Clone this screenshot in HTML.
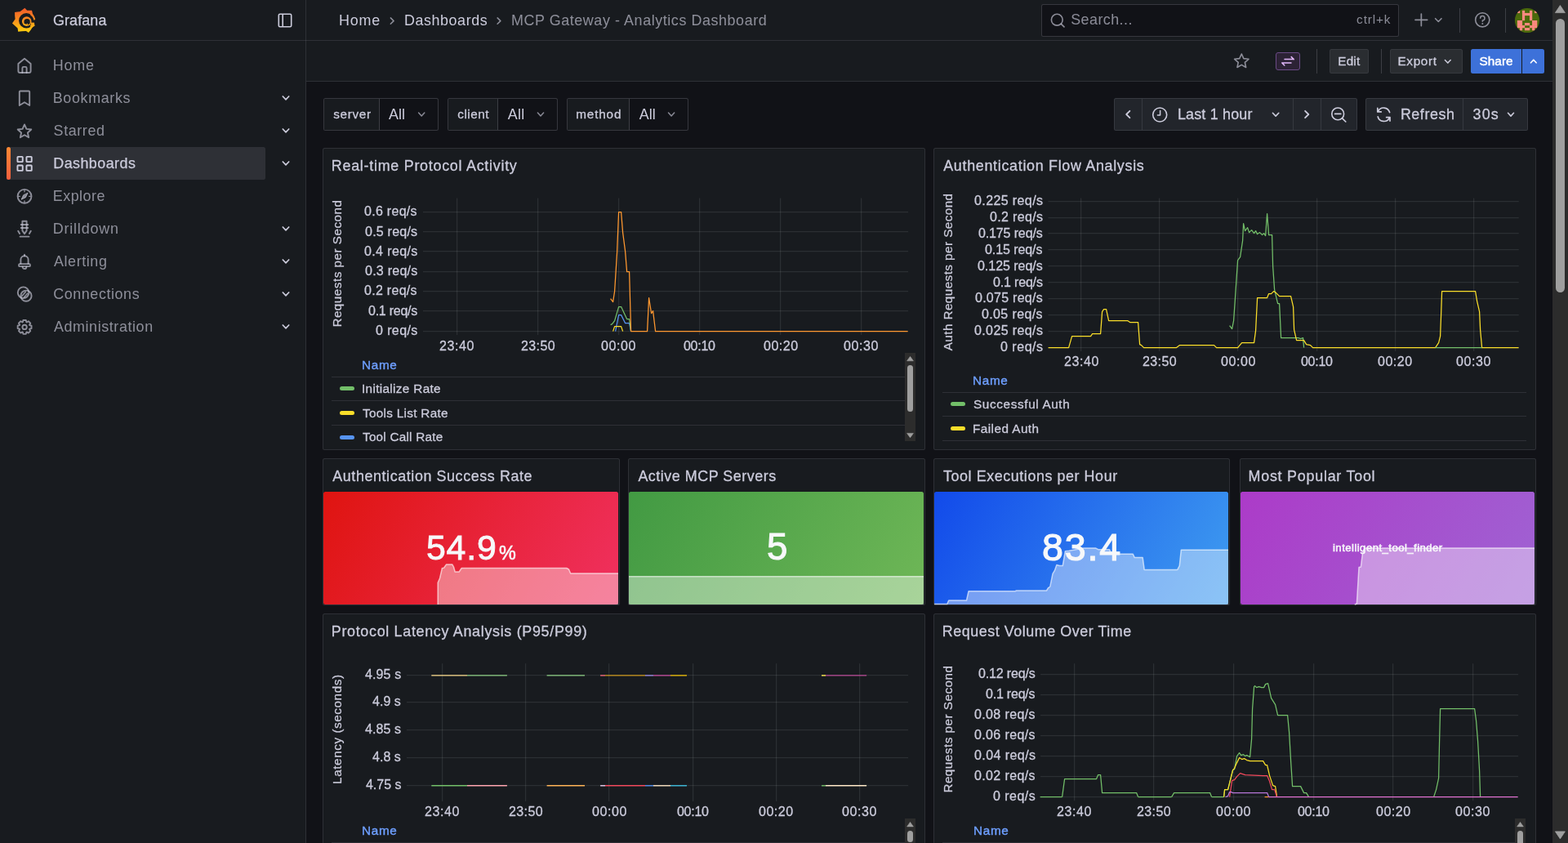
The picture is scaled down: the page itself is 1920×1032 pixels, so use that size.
<!DOCTYPE html>
<html lang="en"><head><meta charset="utf-8">
<title>MCP Gateway - Analytics Dashboard - Dashboards - Grafana</title>
<style>
*{box-sizing:border-box;margin:0;padding:0}
html,body{width:1920px;height:1032px;overflow:hidden;background:#111217;}
body{font-family:"Liberation Sans", sans-serif;color:#ccccdc;position:relative;-webkit-font-smoothing:antialiased;}
.b{position:absolute;display:block}
.t{position:absolute;white-space:nowrap;display:block}
svg{overflow:visible}
svg text{font-family:"Liberation Sans", sans-serif}
</style></head><body>
<div class="b" style="left:0px;top:0px;width:375px;height:1032px;background:#181b1f;border-right:1px solid rgba(204,204,220,0.12);"></div>
<div class="b" style="left:0px;top:0px;width:375px;height:50px;border-bottom:1px solid rgba(204,204,220,0.12);"></div>
<div class="b" style="left:375px;top:0px;width:1526px;height:50px;background:#181b1f;border-bottom:1px solid rgba(204,204,220,0.12);"></div>
<div class="b" style="left:375px;top:50px;width:1526px;height:50px;background:#181b1f;border-bottom:1px solid rgba(204,204,220,0.12);"></div>
<div class="b" style="left:8px;top:180px;width:317px;height:40px;background:rgba(204,204,220,0.12);border-radius:2.5px;"></div>
<div class="b" style="left:8px;top:180px;width:4.6px;height:40px;background:linear-gradient(0deg,#f55f3e 0%,#ff8833 100%);border-radius:2.5px;"></div>
<div class="b" style="left:1275px;top:5px;width:438px;height:40px;background:#111217;border:1px solid rgba(204,204,220,0.20);border-radius:2.5px;"></div>
<div class="b" style="left:1787px;top:10px;width:1px;height:30px;background:rgba(204,204,220,0.20);"></div>
<div class="b" style="left:1843px;top:10px;width:1px;height:30px;background:rgba(204,204,220,0.20);"></div>
<div class="b" style="left:1562px;top:64px;width:30px;height:22px;background:#2c2235;border:1px solid #6a4a86;border-radius:3px;"></div>
<div class="b" style="left:1612px;top:60px;width:1px;height:30px;background:rgba(204,204,220,0.20);"></div>
<div class="b" style="left:1628px;top:60px;width:48px;height:30px;background:rgba(204,204,220,0.10);border:1px solid rgba(204,204,220,0.08);border-radius:2.5px;"></div>
<div class="b" style="left:1691px;top:60px;width:1px;height:30px;background:rgba(204,204,220,0.20);"></div>
<div class="b" style="left:1702px;top:60px;width:89px;height:30px;background:rgba(204,204,220,0.10);border:1px solid rgba(204,204,220,0.08);border-radius:2.5px;"></div>
<div class="b" style="left:1801px;top:60px;width:62px;height:30px;background:#3d71d9;border-radius:2.5px 0 0 2.5px;"></div>
<div class="b" style="left:1864px;top:60px;width:27px;height:30px;background:#3d71d9;border-radius:0 2.5px 2.5px 0;"></div>
<div class="b" style="left:396px;top:120px;width:141px;height:40px;background:#111217;border:1px solid rgba(204,204,220,0.20);border-radius:2.5px;"></div>
<div class="b" style="left:397px;top:121px;width:68px;height:38px;background:#181b1f;border-right:1px solid rgba(204,204,220,0.20);border-radius:2px 0 0 2px;"></div>
<div class="b" style="left:548px;top:120px;width:135px;height:40px;background:#111217;border:1px solid rgba(204,204,220,0.20);border-radius:2.5px;"></div>
<div class="b" style="left:549px;top:121px;width:61px;height:38px;background:#181b1f;border-right:1px solid rgba(204,204,220,0.20);border-radius:2px 0 0 2px;"></div>
<div class="b" style="left:694px;top:120px;width:149px;height:40px;background:#111217;border:1px solid rgba(204,204,220,0.20);border-radius:2.5px;"></div>
<div class="b" style="left:695px;top:121px;width:76px;height:38px;background:#181b1f;border-right:1px solid rgba(204,204,220,0.20);border-radius:2px 0 0 2px;"></div>
<div class="b" style="left:1364px;top:120px;width:35px;height:40px;background:#22252b;border:1px solid rgba(204,204,220,0.12);border-radius:2.5px 0 0 2.5px;"></div>
<div class="b" style="left:1399px;top:120px;width:185px;height:40px;background:#22252b;border:1px solid rgba(204,204,220,0.12);border-radius:0 0 0 0;border-left:0;"></div>
<div class="b" style="left:1584px;top:120px;width:33.5px;height:40px;background:#22252b;border:1px solid rgba(204,204,220,0.12);border-radius:0 0 0 0;border-left:0;"></div>
<div class="b" style="left:1617.5px;top:120px;width:44.5px;height:40px;background:#22252b;border:1px solid rgba(204,204,220,0.12);border-radius:0 2.5px 2.5px 0;border-left:0;"></div>
<div class="b" style="left:1672px;top:120px;width:120px;height:40px;background:#22252b;border:1px solid rgba(204,204,220,0.12);border-radius:2.5px 0 0 2.5px;"></div>
<div class="b" style="left:1792px;top:120px;width:79px;height:40px;background:#22252b;border:1px solid rgba(204,204,220,0.12);border-radius:0 2.5px 2.5px 0;border-left:0;"></div>
<div class="b" style="left:1901px;top:0px;width:19px;height:1032px;background:#2c2c2c;"></div>
<div class="b" style="left:1905px;top:23px;width:11px;height:335px;background:#9f9f9f;border-radius:5.5px;"></div>
<div class="b" style="left:395px;top:181px;width:738px;height:370px;background:#181b1f;border:1px solid rgba(204,204,220,0.12);border-radius:2.5px;"></div>
<svg class="b" style="left:397.90px;top:230.40px;will-change:transform" width="30" height="185.6" viewBox="0 0 30 185.6"><text transform="translate(20 92.80) rotate(-90)" text-anchor="middle" font-size="15.2" fill="#ccccdc" stroke="#ccccdc" stroke-width="0.25" textLength="155.6" lengthAdjust="spacing">Requests per Second</text></svg>
<div class="b" style="left:406px;top:461px;width:702px;height:1px;background:rgba(204,204,220,0.12);"></div>
<div class="b" style="left:415.8px;top:473.2px;width:18px;height:5px;background:#73bf69;border-radius:2.5px;"></div>
<div class="b" style="left:406px;top:490.3px;width:702px;height:1px;background:rgba(204,204,220,0.12);"></div>
<div class="b" style="left:415.8px;top:502.5px;width:18px;height:5px;background:#fade2a;border-radius:2.5px;"></div>
<div class="b" style="left:406px;top:519.6px;width:702px;height:1px;background:rgba(204,204,220,0.12);"></div>
<div class="b" style="left:415.8px;top:532.7px;width:18px;height:5px;background:#5794f2;border-radius:2.5px;"></div>
<div class="b" style="left:1108px;top:432.2px;width:13px;height:107.8px;background:#2c2c2c;"></div>
<div class="b" style="left:1111px;top:446.7px;width:7px;height:57.5px;background:#9f9f9f;border-radius:3.5px;"></div>
<div class="b" style="left:1143px;top:181px;width:738px;height:370px;background:#181b1f;border:1px solid rgba(204,204,220,0.12);border-radius:2.5px;"></div>
<svg class="b" style="left:1145.90px;top:221.55px;will-change:transform" width="30" height="222.3" viewBox="0 0 30 222.3"><text transform="translate(20 111.15) rotate(-90)" text-anchor="middle" font-size="15.2" fill="#ccccdc" stroke="#ccccdc" stroke-width="0.25" textLength="192.3" lengthAdjust="spacing">Auth Requests per Second</text></svg>
<div class="b" style="left:1154px;top:480px;width:715px;height:1px;background:rgba(204,204,220,0.12);"></div>
<div class="b" style="left:1163.8px;top:492.2px;width:18px;height:5px;background:#73bf69;border-radius:2.5px;"></div>
<div class="b" style="left:1154px;top:508.9px;width:715px;height:1px;background:rgba(204,204,220,0.12);"></div>
<div class="b" style="left:1163.8px;top:522px;width:18px;height:5px;background:#fade2a;border-radius:2.5px;"></div>
<div class="b" style="left:1154px;top:539.1px;width:715px;height:1px;background:rgba(204,204,220,0.12);"></div>
<div class="b" style="left:395px;top:561px;width:364px;height:180px;background:#181b1f;border:1px solid rgba(204,204,220,0.12);border-radius:2.5px;"></div>
<div class="b" style="left:396px;top:602px;width:361px;height:138px;background:linear-gradient(120deg,rgb(223,20,16),rgb(240,49,96));border-radius:2.5px;"></div>
<div class="b" style="left:769px;top:561px;width:364px;height:180px;background:#181b1f;border:1px solid rgba(204,204,220,0.12);border-radius:2.5px;"></div>
<div class="b" style="left:770px;top:602px;width:361px;height:138px;background:linear-gradient(120deg,rgb(66,154,67),rgb(111,183,87));border-radius:2.5px;"></div>
<div class="b" style="left:1143px;top:561px;width:363px;height:180px;background:#181b1f;border:1px solid rgba(204,204,220,0.12);border-radius:2.5px;"></div>
<div class="b" style="left:1144px;top:602px;width:360px;height:138px;background:linear-gradient(120deg,rgb(18,74,234),rgb(63,157,240));border-radius:2.5px;"></div>
<div class="b" style="left:1518px;top:561px;width:363px;height:180px;background:#181b1f;border:1px solid rgba(204,204,220,0.12);border-radius:2.5px;"></div>
<div class="b" style="left:1519px;top:602px;width:360px;height:138px;background:linear-gradient(120deg,rgb(172,59,200),rgb(159,99,211));border-radius:2.5px;"></div>
<div class="b" style="left:395px;top:751px;width:738px;height:370px;background:#181b1f;border:1px solid rgba(204,204,220,0.12);border-radius:2.5px;"></div>
<svg class="b" style="left:397.90px;top:811.25px;will-change:transform" width="30" height="163.9" viewBox="0 0 30 163.9"><text transform="translate(20 81.95) rotate(-90)" text-anchor="middle" font-size="15.2" fill="#ccccdc" stroke="#ccccdc" stroke-width="0.25" textLength="133.9" lengthAdjust="spacing">Latency (seconds)</text></svg>
<div class="b" style="left:406px;top:1031px;width:702px;height:1px;background:rgba(204,204,220,0.12);"></div>
<div class="b" style="left:1108px;top:1002.3px;width:13px;height:107.7px;background:#2c2c2c;"></div>
<div class="b" style="left:1111px;top:1017px;width:7px;height:14.3px;background:#9f9f9f;border-radius:3.5px;"></div>
<div class="b" style="left:1143px;top:751px;width:738px;height:370px;background:#181b1f;border:1px solid rgba(204,204,220,0.12);border-radius:2.5px;"></div>
<svg class="b" style="left:1145.90px;top:800.10px;will-change:transform" width="30" height="185.6" viewBox="0 0 30 185.6"><text transform="translate(20 92.80) rotate(-90)" text-anchor="middle" font-size="15.2" fill="#ccccdc" stroke="#ccccdc" stroke-width="0.25" textLength="155.6" lengthAdjust="spacing">Requests per Second</text></svg>
<div class="b" style="left:1154px;top:1031px;width:701px;height:1px;background:rgba(204,204,220,0.12);"></div>
<div class="b" style="left:1855px;top:1002.3px;width:13px;height:107.7px;background:#2c2c2c;"></div>
<div class="b" style="left:1858px;top:1017px;width:7px;height:43px;background:#9f9f9f;border-radius:3.5px;"></div>
<svg class="b" style="left:0;top:0" width="1920" height="1032" viewBox="0 0 1920 1032">

<defs><linearGradient id="lg" gradientUnits="userSpaceOnUse" x1="0" y1="905" x2="0" y2="120">
<stop offset="0" stop-color="#fcd40c"/><stop offset="0.45" stop-color="#f8951d"/><stop offset="1" stop-color="#f1582a"/></linearGradient></defs>
<g transform="translate(10 5) scale(0.03876)">
<path fill="url(#lg)" d="M525 122 L598 202 Q670 192 748 203 Q765 260 772 300 Q840 380 858 492 L815 470 L835 690 Q790 700 762 742 Q720 820 642 902 Q600 862 562 850 Q440 850 315 872 Q305 800 298 760 Q220 690 128 606 Q190 520 222 470 Q205 360 208 258 Q300 250 372 240 Q440 190 525 122 Z"/>
<circle cx="575" cy="522" r="236" fill="#181b1f"/>
<path fill="#181b1f" d="M780 505 L905 470 L905 585 L800 585 Z"/>
<path fill="url(#lg)" d="M700 300 Q800 350 858 492 Q840 500 815 508 Q790 400 700 345 Z"/>
<circle cx="585" cy="545" r="150" fill="url(#lg)"/>
<path fill="url(#lg)" d="M720 580 L812 585 L838 690 Q790 700 762 742 L690 705 Q730 650 720 580 Z"/>
<circle cx="596" cy="560" r="96" fill="#181b1f"/>
<path fill="none" stroke="url(#lg)" stroke-width="34" stroke-linecap="round" d="M520 640 Q570 665 612 632"/>
</g>
<path d="M342.8 17.3 H355.2 A1.5 1.5 0 0 1 356.7 18.8 V31.2 A1.5 1.5 0 0 1 355.2 32.7 H342.8 A1.5 1.5 0 0 1 341.3 31.2 V18.8 A1.5 1.5 0 0 1 342.8 17.3 Z M346.2 17.3 V32.7" fill="none" stroke="#ccccdc" stroke-width="1.6" stroke-linecap="round" stroke-linejoin="round" />
<path d="M22.4 87.05 V77.95 L30 71.75 L37.6 77.95 V87.05 A2 2 0 0 1 35.6 89.05 H24.4 A2 2 0 0 1 22.4 87.05 Z" fill="none" stroke="rgba(204,204,220,0.65)" stroke-width="1.9" stroke-linecap="round" stroke-linejoin="round" />
<path d="M27.4 89.05 V83.35 A1.5 1.5 0 0 1 28.9 81.85 H31.1 A1.5 1.5 0 0 1 32.6 83.35 V89.05" fill="none" stroke="rgba(204,204,220,0.65)" stroke-width="1.9" stroke-linecap="round" stroke-linejoin="round" />
<path d="M346.3 118 L350 121.8 L353.7 118" fill="none" stroke="#ccccdc" stroke-width="1.7" stroke-linecap="round" stroke-linejoin="round" />
<path d="M24.8 111.55 H35.2 A1 1 0 0 1 36.2 112.55 V128.95 L30 125.25 L23.8 128.95 V112.55 A1 1 0 0 1 24.8 111.55 Z" fill="none" stroke="rgba(204,204,220,0.65)" stroke-width="1.9" stroke-linecap="round" stroke-linejoin="round" />
<path d="M346.3 158 L350 161.8 L353.7 158" fill="none" stroke="#ccccdc" stroke-width="1.7" stroke-linecap="round" stroke-linejoin="round" />
<path d="M30.00 152.48 L32.41 157.88 L38.30 158.50 L33.90 162.47 L35.13 168.26 L30.00 165.30 L24.87 168.26 L26.10 162.47 L21.70 158.50 L27.59 157.88 Z" fill="none" stroke="rgba(204,204,220,0.65)" stroke-width="1.9" stroke-linecap="round" stroke-linejoin="round" />
<path d="M346.3 198 L350 201.8 L353.7 198" fill="none" stroke="#ccccdc" stroke-width="1.7" stroke-linecap="round" stroke-linejoin="round" />
<rect x="21.45" y="191.85" width="6.3" height="6.3" rx="0.6" fill="none" stroke="#ccccdc" stroke-width="1.9"/>
<rect x="32.45" y="191.85" width="6.3" height="6.3" rx="0.6" fill="none" stroke="#ccccdc" stroke-width="1.9"/>
<rect x="21.45" y="202.55" width="6.3" height="6.3" rx="0.6" fill="none" stroke="#ccccdc" stroke-width="1.9"/>
<rect x="32.45" y="202.55" width="6.3" height="6.3" rx="0.6" fill="none" stroke="#ccccdc" stroke-width="1.9"/>
<circle cx="30.05" cy="240.3" r="8.45" fill="none" stroke="rgba(204,204,220,0.65)" stroke-width="1.9"/>
<path d="M33.9 236.45 L31.4 241.75 L26.1 244.25 L28.6 238.95 Z" fill="rgba(204,204,220,0.65)" stroke="rgba(204,204,220,0.65)" stroke-width="1" stroke-linecap="round" stroke-linejoin="round" />
<path d="M30 233.15 v1.6 M30 247.55 v-1.6 M22.8 240.35 h1.6 M37.2 240.35 h-1.6" fill="none" stroke="rgba(204,204,220,0.65)" stroke-width="1.3" stroke-linecap="round" stroke-linejoin="round" />
<path d="M346.3 278 L350 281.8 L353.7 278" fill="none" stroke="#ccccdc" stroke-width="1.7" stroke-linecap="round" stroke-linejoin="round" />
<path d="M27.4 270.75 H32.6 V282.35 L30 286.15 L27.4 282.35 Z" fill="none" stroke="rgba(204,204,220,0.65)" stroke-width="1.9" stroke-linecap="round" stroke-linejoin="round" />
<path d="M25.7 274.95 H34.3 M25.7 278.95 H34.3" fill="none" stroke="rgba(204,204,220,0.65)" stroke-width="1.9" stroke-linecap="round" stroke-linejoin="round" />
<path d="M22.2 282.75 L24.1 285.95 M37.8 282.75 L35.9 285.95" fill="none" stroke="rgba(204,204,220,0.65)" stroke-width="1.9" stroke-linecap="round" stroke-linejoin="round" />
<path d="M24.6 289.65 H35.4" fill="none" stroke="rgba(204,204,220,0.65)" stroke-width="1.9" stroke-linecap="round" stroke-linejoin="round" />
<path d="M346.3 318 L350 321.8 L353.7 318" fill="none" stroke="#ccccdc" stroke-width="1.7" stroke-linecap="round" stroke-linejoin="round" />
<path d="M25.4 322.75 V317.85 A4.6 4.6 0 0 1 34.6 317.85 V322.75" fill="none" stroke="rgba(204,204,220,0.65)" stroke-width="1.9" stroke-linecap="round" stroke-linejoin="round" />
<rect x="23.1" y="323.15" width="13.8" height="3.0" rx="1" fill="none" stroke="rgba(204,204,220,0.65)" stroke-width="1.9"/>
<path d="M30 311.75 v1.6" fill="none" stroke="rgba(204,204,220,0.65)" stroke-width="1.9" stroke-linecap="round" stroke-linejoin="round" />
<path d="M27.6 326.65 A2.4 2.4 0 0 0 32.4 326.65" fill="none" stroke="rgba(204,204,220,0.65)" stroke-width="1.9" stroke-linecap="round" stroke-linejoin="round" />
<path d="M346.3 358 L350 361.8 L353.7 358" fill="none" stroke="#ccccdc" stroke-width="1.7" stroke-linecap="round" stroke-linejoin="round" />
<circle cx="28.6" cy="358.2" r="6.8" fill="none" stroke="rgba(204,204,220,0.65)" stroke-width="1.9"/>
<circle cx="32" cy="362.2" r="6.6" fill="none" stroke="rgba(204,204,220,0.65)" stroke-width="1.9"/>
<path d="M27 362.2 L31.3 357.4 M29.6 363.8 L33.6 359.2" fill="none" stroke="rgba(204,204,220,0.65)" stroke-width="1.7" stroke-linecap="round" stroke-linejoin="round" />
<path d="M346.3 398 L350 401.8 L353.7 398" fill="none" stroke="#ccccdc" stroke-width="1.7" stroke-linecap="round" stroke-linejoin="round" />
<path d="M28.39 392.02 L31.81 392.02 L32.39 394.37 L32.78 394.53 L34.85 393.28 L37.27 395.70 L36.02 397.77 L36.18 398.16 L38.53 398.74 L38.53 402.16 L36.18 402.74 L36.02 403.13 L37.27 405.20 L34.85 407.62 L32.78 406.37 L32.39 406.53 L31.81 408.88 L28.39 408.88 L27.81 406.53 L27.42 406.37 L25.35 407.62 L22.93 405.20 L24.18 403.13 L24.02 402.74 L21.67 402.16 L21.67 398.74 L24.02 398.16 L24.18 397.77 L22.93 395.70 L25.35 393.28 L27.42 394.53 L27.81 394.37 Z" fill="none" stroke="rgba(204,204,220,0.65)" stroke-width="1.9" stroke-linecap="round" stroke-linejoin="round" />
<circle cx="30.1" cy="400.45" r="2.7" fill="none" stroke="rgba(204,204,220,0.65)" stroke-width="1.9"/>
<path d="M478.3 21.9 L482.1 25.6 L478.3 29.3" fill="none" stroke="rgba(204,204,220,0.65)" stroke-width="1.5" stroke-linecap="round" stroke-linejoin="round" />
<path d="M609.1 21.9 L612.9 25.6 L609.1 29.3" fill="none" stroke="rgba(204,204,220,0.65)" stroke-width="1.5" stroke-linecap="round" stroke-linejoin="round" />
<circle cx="1294.3" cy="24.2" r="6.9" fill="none" stroke="rgba(204,204,220,0.65)" stroke-width="1.6"/>
<path d="M1299.4 29.3 L1303 32.9" fill="none" stroke="rgba(204,204,220,0.65)" stroke-width="1.7" stroke-linecap="round" stroke-linejoin="round" />
<path d="M1740.35 17 V31.6 M1733 24.3 H1747.7" fill="none" stroke="rgba(204,204,220,0.65)" stroke-width="1.7" stroke-linecap="round" stroke-linejoin="round" />
<path d="M1757.6 22.7 L1761.3 26.5 L1765 22.7" fill="none" stroke="rgba(204,204,220,0.65)" stroke-width="1.6" stroke-linecap="round" stroke-linejoin="round" />
<circle cx="1815.25" cy="24.3" r="8.6" fill="none" stroke="rgba(204,204,220,0.65)" stroke-width="1.6"/>
<path d="M1812.6 22.2 A2.7 2.7 0 1 1 1815.3 25 V26.2" fill="none" stroke="rgba(204,204,220,0.65)" stroke-width="1.5" stroke-linecap="round" stroke-linejoin="round" />
<circle cx="1815.3" cy="28.9" r="1" fill="rgba(204,204,220,0.65)"/>
<g><clipPath id="avc"><circle cx="1870" cy="25" r="15.1"/></clipPath><g clip-path="url(#avc)"><rect x="1854" y="9" width="32" height="32" fill="#4b690b"/><rect x="1857.88" y="12.88" width="3.18" height="3.18" fill="#ff8a80"/><rect x="1863.94" y="12.88" width="3.18" height="3.18" fill="#ff8a80"/><rect x="1873.03" y="12.88" width="3.18" height="3.18" fill="#ff8a80"/><rect x="1879.09" y="12.88" width="3.18" height="3.18" fill="#ff8a80"/><rect x="1863.94" y="15.91" width="3.18" height="3.18" fill="#ff8a80"/><rect x="1866.97" y="15.91" width="3.18" height="3.18" fill="#ff8a80"/><rect x="1870.00" y="15.91" width="3.18" height="3.18" fill="#ff8a80"/><rect x="1873.03" y="15.91" width="3.18" height="3.18" fill="#ff8a80"/><rect x="1863.94" y="18.94" width="3.18" height="3.18" fill="#ff8a80"/><rect x="1873.03" y="18.94" width="3.18" height="3.18" fill="#ff8a80"/><rect x="1863.94" y="21.97" width="3.18" height="3.18" fill="#ff8a80"/><rect x="1873.03" y="21.97" width="3.18" height="3.18" fill="#ff8a80"/><rect x="1857.88" y="25.00" width="3.18" height="3.18" fill="#ff8a80"/><rect x="1860.91" y="25.00" width="3.18" height="3.18" fill="#ff8a80"/><rect x="1876.06" y="25.00" width="3.18" height="3.18" fill="#ff8a80"/><rect x="1879.09" y="25.00" width="3.18" height="3.18" fill="#ff8a80"/><rect x="1857.88" y="28.03" width="3.18" height="3.18" fill="#ff8a80"/><rect x="1860.91" y="28.03" width="3.18" height="3.18" fill="#ff8a80"/><rect x="1866.97" y="28.03" width="3.18" height="3.18" fill="#ff8a80"/><rect x="1870.00" y="28.03" width="3.18" height="3.18" fill="#ff8a80"/><rect x="1876.06" y="28.03" width="3.18" height="3.18" fill="#ff8a80"/><rect x="1879.09" y="28.03" width="3.18" height="3.18" fill="#ff8a80"/><rect x="1857.88" y="31.06" width="3.18" height="3.18" fill="#ff8a80"/><rect x="1860.91" y="31.06" width="3.18" height="3.18" fill="#ff8a80"/><rect x="1863.94" y="31.06" width="3.18" height="3.18" fill="#ff8a80"/><rect x="1873.03" y="31.06" width="3.18" height="3.18" fill="#ff8a80"/><rect x="1876.06" y="31.06" width="3.18" height="3.18" fill="#ff8a80"/><rect x="1879.09" y="31.06" width="3.18" height="3.18" fill="#ff8a80"/><rect x="1860.91" y="34.09" width="3.18" height="3.18" fill="#ff8a80"/><rect x="1866.97" y="34.09" width="3.18" height="3.18" fill="#ff8a80"/><rect x="1870.00" y="34.09" width="3.18" height="3.18" fill="#ff8a80"/><rect x="1876.06" y="34.09" width="3.18" height="3.18" fill="#ff8a80"/></g></g>
<path d="M1520.30 65.99 L1522.82 71.64 L1528.96 72.29 L1524.37 76.42 L1525.65 82.47 L1520.30 79.38 L1514.95 82.47 L1516.23 76.42 L1511.64 72.29 L1517.78 71.64 Z" fill="none" stroke="rgba(204,204,220,0.65)" stroke-width="1.6" stroke-linecap="round" stroke-linejoin="round" />
<path d="M1573 72.6 H1584 M1581.2 69.6 L1584.2 72.6 M1581 77 H1570 M1572.8 80 L1569.8 77" fill="none" stroke="#e2b8fb" stroke-width="1.5" stroke-linecap="round" stroke-linejoin="round" />
<path d="M1769.4 73.5 L1772.8 77.1 L1776.2 73.5" fill="none" stroke="#ccccdc" stroke-width="1.5" stroke-linecap="round" stroke-linejoin="round" />
<path d="M1874.5 76.8 L1877.8 73.2 L1881.1 76.8" fill="none" stroke="#ffffff" stroke-width="1.6" stroke-linecap="round" stroke-linejoin="round" />
<path d="M512.6 138.1 L516.2 141.9 L519.8 138.1" fill="none" stroke="rgba(204,204,220,0.65)" stroke-width="1.5" stroke-linecap="round" stroke-linejoin="round" />
<path d="M658.4 138.1 L662 141.9 L665.6 138.1" fill="none" stroke="rgba(204,204,220,0.65)" stroke-width="1.5" stroke-linecap="round" stroke-linejoin="round" />
<path d="M818.5 138.1 L822.1 141.9 L825.7 138.1" fill="none" stroke="rgba(204,204,220,0.65)" stroke-width="1.5" stroke-linecap="round" stroke-linejoin="round" />
<path d="M1383.4 135.8 L1379.2 140 L1383.4 144.2" fill="none" stroke="#ccccdc" stroke-width="1.8" stroke-linecap="round" stroke-linejoin="round" />
<circle cx="1420.2" cy="140.5" r="8.5" fill="none" stroke="#ccccdc" stroke-width="1.6"/>
<path d="M1420.6 135.6 V140.9 H1417.4" fill="none" stroke="#ccccdc" stroke-width="1.5" stroke-linecap="round" stroke-linejoin="round" />
<path d="M1558.4 138.3 L1562.1 142.1 L1565.8 138.3" fill="none" stroke="#ccccdc" stroke-width="1.6" stroke-linecap="round" stroke-linejoin="round" />
<path d="M1598.1 135.8 L1602.3 140 L1598.1 144.2" fill="none" stroke="#ccccdc" stroke-width="1.8" stroke-linecap="round" stroke-linejoin="round" />
<circle cx="1638.2" cy="139.4" r="7.4" fill="none" stroke="#ccccdc" stroke-width="1.6"/>
<path d="M1643.6 144.9 L1647.8 149.0 M1634.6 139.4 H1641.8" fill="none" stroke="#ccccdc" stroke-width="1.7" stroke-linecap="round" stroke-linejoin="round" />
<path d="M1701.6 137.6 A7.6 7.6 0 0 0 1687.4 136.4 M1686.8 132.4 V136.9 H1691.2 M1687.2 142.9 A7.6 7.6 0 0 0 1701.4 144.1 M1702 148.1 V143.6 H1697.6" fill="none" stroke="#ccccdc" stroke-width="1.7" stroke-linecap="round" stroke-linejoin="round" />
<path d="M1846.5 138.3 L1850 142.1 L1853.5 138.3" fill="none" stroke="#ccccdc" stroke-width="1.6" stroke-linecap="round" stroke-linejoin="round" />
<path d="M1904.4 15.6 L1910.4 6.6 L1916.4 15.6 Z" fill="#9f9f9f" stroke="#9f9f9f" stroke-width="0.8" stroke-linejoin="round"/>
<path d="M1904.4 1017.9 L1910.4 1026.9 L1916.4 1017.9 Z" fill="#9f9f9f" stroke="#9f9f9f" stroke-width="0.8" stroke-linejoin="round"/>
<path d="M518 405.625 H1112" stroke="rgba(240,250,255,0.09)" stroke-width="1.25" fill="none"/>
<path d="M518 380.625 H1112" stroke="rgba(240,250,255,0.09)" stroke-width="1.25" fill="none"/>
<path d="M518 356.625 H1112" stroke="rgba(240,250,255,0.09)" stroke-width="1.25" fill="none"/>
<path d="M518 332.625 H1112" stroke="rgba(240,250,255,0.09)" stroke-width="1.25" fill="none"/>
<path d="M518 307.625 H1112" stroke="rgba(240,250,255,0.09)" stroke-width="1.25" fill="none"/>
<path d="M518 283.625 H1112" stroke="rgba(240,250,255,0.09)" stroke-width="1.25" fill="none"/>
<path d="M518 259.625 H1112" stroke="rgba(240,250,255,0.09)" stroke-width="1.25" fill="none"/>
<path d="M559.625 242.5 V410" stroke="rgba(240,250,255,0.09)" stroke-width="1.25" fill="none"/>
<path d="M658.625 242.5 V410" stroke="rgba(240,250,255,0.09)" stroke-width="1.25" fill="none"/>
<path d="M757.625 242.5 V410" stroke="rgba(240,250,255,0.09)" stroke-width="1.25" fill="none"/>
<path d="M856.625 242.5 V410" stroke="rgba(240,250,255,0.09)" stroke-width="1.25" fill="none"/>
<path d="M955.625 242.5 V410" stroke="rgba(240,250,255,0.09)" stroke-width="1.25" fill="none"/>
<path d="M1054.62 242.5 V410" stroke="rgba(240,250,255,0.09)" stroke-width="1.25" fill="none"/>
<path d="M753.6 405.6 L757.6 385.6 L760.6 385.6 L765.6 395.6 L770.6 395.6 L772.6 405.6" stroke="#5794f2" stroke-width="1.25" fill="none" stroke-linejoin="round" stroke-linecap="butt" />
<path d="M747.6 397.6 L749.6 396.6 L752.6 392.6 L757.6 375.6 L760.6 375.6 L767.6 390.6 L770.6 390.6 L772.6 405.6" stroke="#73bf69" stroke-width="1.25" fill="none" stroke-linejoin="round" stroke-linecap="butt" />
<path d="M750.6 405.6 L752.6 399.6 L760.6 399.6 L762.6 405.6" stroke="#fade2a" stroke-width="1.25" fill="none" stroke-linejoin="round" stroke-linecap="butt" />
<path d="M747.6 365.6 L750.6 369.6 L752.6 356.6 L755.6 308.6 L757.6 259.6 L760.6 259.6 L762.6 284.6 L765.6 307.6 L767.6 332.6 L770.6 332.6 L772.6 405.6 L792.6 405.6 L794.6 364.6 L797.6 383.6 L799.6 380.6 L802.6 405.6 L1111.6 405.6" stroke="#ff9830" stroke-width="1.25" fill="none" stroke-linejoin="round" stroke-linecap="butt" />
<path d="M1110.6 441.8 L1114.5 436.4 L1118.4 441.8 Z" fill="#9f9f9f" stroke="#9f9f9f" stroke-width="0.6" stroke-linejoin="round"/>
<path d="M1110.6 530.4 L1114.5 535.8 L1118.4 530.4 Z" fill="#9f9f9f" stroke="#9f9f9f" stroke-width="0.6" stroke-linejoin="round"/>
<path d="M1283.4 425.625 H1859.7" stroke="rgba(240,250,255,0.09)" stroke-width="1.25" fill="none"/>
<path d="M1283.4 405.625 H1859.7" stroke="rgba(240,250,255,0.09)" stroke-width="1.25" fill="none"/>
<path d="M1283.4 385.625 H1859.7" stroke="rgba(240,250,255,0.09)" stroke-width="1.25" fill="none"/>
<path d="M1283.4 365.625 H1859.7" stroke="rgba(240,250,255,0.09)" stroke-width="1.25" fill="none"/>
<path d="M1283.4 345.625 H1859.7" stroke="rgba(240,250,255,0.09)" stroke-width="1.25" fill="none"/>
<path d="M1283.4 325.625 H1859.7" stroke="rgba(240,250,255,0.09)" stroke-width="1.25" fill="none"/>
<path d="M1283.4 305.625 H1859.7" stroke="rgba(240,250,255,0.09)" stroke-width="1.25" fill="none"/>
<path d="M1283.4 285.625 H1859.7" stroke="rgba(240,250,255,0.09)" stroke-width="1.25" fill="none"/>
<path d="M1283.4 266.625 H1859.7" stroke="rgba(240,250,255,0.09)" stroke-width="1.25" fill="none"/>
<path d="M1283.4 246.625 H1859.7" stroke="rgba(240,250,255,0.09)" stroke-width="1.25" fill="none"/>
<path d="M1323.62 242.5 V430" stroke="rgba(240,250,255,0.09)" stroke-width="1.25" fill="none"/>
<path d="M1419.62 242.5 V430" stroke="rgba(240,250,255,0.09)" stroke-width="1.25" fill="none"/>
<path d="M1515.62 242.5 V430" stroke="rgba(240,250,255,0.09)" stroke-width="1.25" fill="none"/>
<path d="M1612.62 242.5 V430" stroke="rgba(240,250,255,0.09)" stroke-width="1.25" fill="none"/>
<path d="M1708.62 242.5 V430" stroke="rgba(240,250,255,0.09)" stroke-width="1.25" fill="none"/>
<path d="M1804.62 242.5 V430" stroke="rgba(240,250,255,0.09)" stroke-width="1.25" fill="none"/>
<path d="M1505.6 398.6 L1508.6 402.6 L1510.6 392.6 L1515.6 318.6 L1518.6 314.6 L1521.6 294.6 L1522.6 273.6 L1524.6 282.6 L1527.6 278.6 L1529.6 284.6 L1532.6 281.6 L1535.6 285.6 L1537.6 282.6 L1539.6 286.6 L1542.6 284.6 L1545.6 287.6 L1547.6 285.6 L1549.6 288.6 L1551.6 261.6 L1553.6 287.6 L1557.6 287.6 L1558.6 325.6 L1560.6 354.6 L1564.6 371.6 L1566.6 371.6 L1568.6 413.6 L1589.6 413.6 L1592.6 414.6 L1595.6 413.6 L1596.6 425.6" stroke="#73bf69" stroke-width="1.25" fill="none" stroke-linejoin="round" stroke-linecap="butt" />
<path d="M1283.6 425.6 L1308.6 425.6 L1312.6 411.6 L1335.6 411.6 L1337.6 408.6 L1347.6 408.6 L1349.6 381.6 L1351.6 378.6 L1354.6 378.6 L1357.6 392.6 L1380.6 392.6 L1383.6 394.6 L1393.6 394.6 L1395.6 421.6 L1397.6 422.6 L1400.6 425.6 L1440.6 425.6 L1444.6 422.6 L1486.6 422.6 L1489.6 425.6 L1515.6 425.6 L1520.6 419.6 L1535.6 419.6 L1537.6 404.6 L1539.6 364.6 L1551.6 364.6 L1553.6 359.6 L1556.6 359.6 L1559.6 356.6 L1562.6 358.6 L1566.6 362.6 L1580.6 362.6 L1583.6 375.6 L1584.6 403.6 L1587.6 416.6 L1596.6 416.6 L1599.6 421.6 L1604.6 422.6 L1607.6 425.6 L1757.6 425.6 L1761.6 419.6 L1763.6 411.6 L1764.6 385.6 L1765.6 356.6 L1806.6 356.6 L1808.6 368.6 L1811.6 381.6 L1812.6 403.6 L1814.6 425.6 L1859.6 425.6" stroke="#fade2a" stroke-width="1.25" fill="none" stroke-linejoin="round" stroke-linecap="butt" />
<path d="M1757.6 425.6 L1814.6 425.6" stroke="#73bf69" stroke-width="1.25" fill="none" stroke-linejoin="round" stroke-linecap="butt" />
<path d="M536.2 740.0 L536.2 740.0 L536.2 713.3 L538.5 708.0 L541.4 695.5 L543.5 695.3 L546.4 691.1 L553.9 691.1 L555.5 694.0 L557.2 700.0 L562.2 700.0 L565.2 695.5 L693.8 695.5 L696.5 697.0 L698.7 702.0 L757.0 702.0 L757.0 740.0" stroke="none" stroke-width="0" fill="rgba(255,255,255,0.40)" stroke-linejoin="round" stroke-linecap="butt" />
<path d="M536.2 740.0 L536.2 713.3 L538.5 708.0 L541.4 695.5 L543.5 695.3 L546.4 691.1 L553.9 691.1 L555.5 694.0 L557.2 700.0 L562.2 700.0 L565.2 695.5 L693.8 695.5 L696.5 697.0 L698.7 702.0 L757.0 702.0" stroke="rgba(255,255,255,0.62)" stroke-width="1.5" fill="none" stroke-linejoin="round" stroke-linecap="butt" />
<path d="M770.0 740.0 L770.0 705.8 L1131.0 705.8 L1131.0 740.0" stroke="none" stroke-width="0" fill="rgba(255,255,255,0.40)" stroke-linejoin="round" stroke-linecap="butt" />
<path d="M770.0 705.8 L1131.0 705.8" stroke="rgba(255,255,255,0.62)" stroke-width="1.5" fill="none" stroke-linejoin="round" stroke-linecap="butt" />
<path d="M1144.0 740.0 L1144.0 739.6 L1159.7 739.6 L1161.7 735.0 L1183.5 735.0 L1186.0 723.8 L1242.9 723.8 L1244.8 723.0 L1281.5 723.0 L1283.4 719.8 L1285.8 718.2 L1289.0 702.4 L1291.4 698.4 L1293.9 691.5 L1297.3 692.5 L1301.3 692.5 L1304.4 674.7 L1309.0 674.3 L1327.0 671.1 L1341.8 671.1 L1344.8 672.7 L1358.6 672.7 L1360.6 678.2 L1387.3 678.2 L1389.3 682.6 L1399.2 682.6 L1401.2 697.4 L1441.8 697.4 L1444.3 692.5 L1446.3 673.3 L1504.0 673.3 L1504.0 740.0" stroke="none" stroke-width="0" fill="rgba(255,255,255,0.40)" stroke-linejoin="round" stroke-linecap="butt" />
<path d="M1144.0 739.6 L1159.7 739.6 L1161.7 735.0 L1183.5 735.0 L1186.0 723.8 L1242.9 723.8 L1244.8 723.0 L1281.5 723.0 L1283.4 719.8 L1285.8 718.2 L1289.0 702.4 L1291.4 698.4 L1293.9 691.5 L1297.3 692.5 L1301.3 692.5 L1304.4 674.7 L1309.0 674.3 L1327.0 671.1 L1341.8 671.1 L1344.8 672.7 L1358.6 672.7 L1360.6 678.2 L1387.3 678.2 L1389.3 682.6 L1399.2 682.6 L1401.2 697.4 L1441.8 697.4 L1444.3 692.5 L1446.3 673.3 L1504.0 673.3" stroke="rgba(255,255,255,0.62)" stroke-width="1.5" fill="none" stroke-linejoin="round" stroke-linecap="butt" />
<path d="M1658.8 740.0 L1658.8 740.0 L1661.4 739.0 L1664.0 694.5 L1666.4 694.0 L1668.3 678.6 L1670.3 671.1 L1879.0 671.1 L1879.0 740.0" stroke="none" stroke-width="0" fill="rgba(255,255,255,0.40)" stroke-linejoin="round" stroke-linecap="butt" />
<path d="M1658.8 740.0 L1661.4 739.0 L1664.0 694.5 L1666.4 694.0 L1668.3 678.6 L1670.3 671.1 L1879.0 671.1" stroke="rgba(255,255,255,0.62)" stroke-width="1.5" fill="none" stroke-linejoin="round" stroke-linecap="butt" />
<path d="M497.9 961.625 H1112.1" stroke="rgba(240,250,255,0.09)" stroke-width="1.25" fill="none"/>
<path d="M497.9 927.625 H1112.1" stroke="rgba(240,250,255,0.09)" stroke-width="1.25" fill="none"/>
<path d="M497.9 893.625 H1112.1" stroke="rgba(240,250,255,0.09)" stroke-width="1.25" fill="none"/>
<path d="M497.9 859.625 H1112.1" stroke="rgba(240,250,255,0.09)" stroke-width="1.25" fill="none"/>
<path d="M497.9 826.625 H1112.1" stroke="rgba(240,250,255,0.09)" stroke-width="1.25" fill="none"/>
<path d="M541.625 812.3 V980.9" stroke="rgba(240,250,255,0.09)" stroke-width="1.25" fill="none"/>
<path d="M643.625 812.3 V980.9" stroke="rgba(240,250,255,0.09)" stroke-width="1.25" fill="none"/>
<path d="M745.625 812.3 V980.9" stroke="rgba(240,250,255,0.09)" stroke-width="1.25" fill="none"/>
<path d="M848.625 812.3 V980.9" stroke="rgba(240,250,255,0.09)" stroke-width="1.25" fill="none"/>
<path d="M950.625 812.3 V980.9" stroke="rgba(240,250,255,0.09)" stroke-width="1.25" fill="none"/>
<path d="M1052.62 812.3 V980.9" stroke="rgba(240,250,255,0.09)" stroke-width="1.25" fill="none"/>
<path d="M528.3 826.9 H572" stroke="#ffdf8e" stroke-width="1.4" fill="none"/>
<path d="M572 826.9 H620.9" stroke="#8fd286" stroke-width="1.4" fill="none"/>
<path d="M669.6 826.9 H716" stroke="#8fd286" stroke-width="1.4" fill="none"/>
<path d="M735.1 826.9 H741" stroke="#f2677a" stroke-width="1.4" fill="none"/>
<path d="M741 826.9 H790" stroke="#d19a1c" stroke-width="1.4" fill="none"/>
<path d="M790 826.9 H800" stroke="#9a8be0" stroke-width="1.4" fill="none"/>
<path d="M800 826.9 H821" stroke="#bd4b98" stroke-width="1.4" fill="none"/>
<path d="M821 826.9 H841" stroke="#e5b80a" stroke-width="1.4" fill="none"/>
<path d="M1006 826.9 H1011" stroke="#ffee52" stroke-width="1.4" fill="none"/>
<path d="M1011 826.9 H1061.1" stroke="#bd4b98" stroke-width="1.4" fill="none"/>
<path d="M528.3 961.8 H572" stroke="#73bf69" stroke-width="1.4" fill="none"/>
<path d="M572 961.8 H620.9" stroke="#ffa6b0" stroke-width="1.4" fill="none"/>
<path d="M669.6 961.8 H716" stroke="#ffb357" stroke-width="1.4" fill="none"/>
<path d="M735.1 961.8 H741" stroke="#e8d0f0" stroke-width="1.4" fill="none"/>
<path d="M741 961.8 H790" stroke="#f2495c" stroke-width="1.4" fill="none"/>
<path d="M790 961.8 H800" stroke="#5794f2" stroke-width="1.4" fill="none"/>
<path d="M800 961.8 H821" stroke="#ffe8c8" stroke-width="1.4" fill="none"/>
<path d="M821 961.8 H841" stroke="#40c0e0" stroke-width="1.4" fill="none"/>
<path d="M1006 961.8 H1011" stroke="#73bf69" stroke-width="1.4" fill="none"/>
<path d="M1011 961.8 H1061.1" stroke="#ffe8c8" stroke-width="1.4" fill="none"/>
<path d="M1110.6 1011.9 L1114.5 1006.5 L1118.4 1011.9 Z" fill="#9f9f9f" stroke="#9f9f9f" stroke-width="0.6" stroke-linejoin="round"/>
<path d="M1274.1 975.625 H1859.1" stroke="rgba(240,250,255,0.09)" stroke-width="1.25" fill="none"/>
<path d="M1274.1 950.625 H1859.1" stroke="rgba(240,250,255,0.09)" stroke-width="1.25" fill="none"/>
<path d="M1274.1 925.625 H1859.1" stroke="rgba(240,250,255,0.09)" stroke-width="1.25" fill="none"/>
<path d="M1274.1 900.625 H1859.1" stroke="rgba(240,250,255,0.09)" stroke-width="1.25" fill="none"/>
<path d="M1274.1 875.625 H1859.1" stroke="rgba(240,250,255,0.09)" stroke-width="1.25" fill="none"/>
<path d="M1274.1 850.625 H1859.1" stroke="rgba(240,250,255,0.09)" stroke-width="1.25" fill="none"/>
<path d="M1274.1 825.625 H1859.1" stroke="rgba(240,250,255,0.09)" stroke-width="1.25" fill="none"/>
<path d="M1315.62 812.3 V980.3" stroke="rgba(240,250,255,0.09)" stroke-width="1.25" fill="none"/>
<path d="M1412.62 812.3 V980.3" stroke="rgba(240,250,255,0.09)" stroke-width="1.25" fill="none"/>
<path d="M1510.62 812.3 V980.3" stroke="rgba(240,250,255,0.09)" stroke-width="1.25" fill="none"/>
<path d="M1608.62 812.3 V980.3" stroke="rgba(240,250,255,0.09)" stroke-width="1.25" fill="none"/>
<path d="M1705.62 812.3 V980.3" stroke="rgba(240,250,255,0.09)" stroke-width="1.25" fill="none"/>
<path d="M1803.62 812.3 V980.3" stroke="rgba(240,250,255,0.09)" stroke-width="1.25" fill="none"/>
<path d="M1300.6 975.6 L1303.6 953.6 L1342.6 953.6 L1344.6 948.6 L1347.6 948.6 L1349.6 970.6 L1391.6 970.6 L1393.6 975.6" stroke="#73bf69" stroke-width="1.25" fill="none" stroke-linejoin="round" stroke-linecap="butt" />
<path d="M1434.6 975.6 L1437.6 970.6 L1481.6 970.6 L1483.6 975.6" stroke="#73bf69" stroke-width="1.25" fill="none" stroke-linejoin="round" stroke-linecap="butt" />
<path d="M1498.6 975.6 L1499.6 966.6 L1503.6 966.6 L1505.6 958.6 L1509.6 942.6 L1511.6 941.6 L1514.6 925.6 L1517.6 921.6 L1519.6 924.6 L1522.6 923.6 L1524.6 925.6 L1526.6 924.6 L1530.6 926.6 L1532.6 904.6 L1533.6 867.6 L1535.6 840.6 L1536.6 839.6 L1538.6 841.6 L1541.6 840.6 L1544.6 841.6 L1547.6 841.6 L1549.6 837.6 L1552.6 836.6 L1554.6 845.6 L1556.6 854.6 L1561.6 862.6 L1564.6 875.6 L1576.6 875.6 L1578.6 896.6 L1580.6 931.6 L1582.6 962.6 L1592.6 962.6 L1596.6 970.6 L1599.6 970.6 L1602.6 975.6" stroke="#73bf69" stroke-width="1.25" fill="none" stroke-linejoin="round" stroke-linecap="butt" />
<path d="M1755.6 975.6 L1758.6 966.6 L1761.6 952.6 L1762.6 907.6 L1763.6 867.6 L1805.6 867.6 L1807.6 882.6 L1809.6 907.6 L1811.6 943.6 L1812.6 975.6" stroke="#73bf69" stroke-width="1.25" fill="none" stroke-linejoin="round" stroke-linecap="butt" />
<path d="M1273.6 975.6 L1300.6 975.6" stroke="#73bf69" stroke-width="1.25" fill="none" stroke-linejoin="round" stroke-linecap="butt" />
<path d="M1393.6 975.6 L1434.6 975.6" stroke="#73bf69" stroke-width="1.25" fill="none" stroke-linejoin="round" stroke-linecap="butt" />
<path d="M1483.6 975.6 L1498.6 975.6" stroke="#73bf69" stroke-width="1.25" fill="none" stroke-linejoin="round" stroke-linecap="butt" />
<path d="M1498.6 975.6 L1499.6 966.6 L1503.6 966.6 L1505.6 958.6 L1509.6 942.6 L1511.6 940.6 L1514.6 933.6 L1517.6 927.6 L1520.6 929.6 L1523.6 928.6 L1526.6 930.6 L1530.6 931.6 L1546.6 931.6 L1549.6 936.6 L1551.6 936.6 L1554.6 949.6 L1558.6 961.6 L1561.6 962.6 L1563.6 975.6" stroke="#fade2a" stroke-width="1.25" fill="none" stroke-linejoin="round" stroke-linecap="butt" />
<path d="M1505.6 975.6 L1508.6 955.6 L1511.6 954.6 L1514.6 950.6 L1518.6 946.6 L1524.6 948.6 L1546.6 949.6 L1551.6 949.6 L1554.6 956.6 L1557.6 966.6 L1560.6 966.6 L1563.6 975.6" stroke="#f2495c" stroke-width="1.25" fill="none" stroke-linejoin="round" stroke-linecap="butt" />
<path d="M1548.6 975.6 L1553.6 975.6" stroke="#ff9830" stroke-width="1.25" fill="none" stroke-linejoin="round" stroke-linecap="butt" />
<path d="M1500.6 975.6 L1503.6 974.6 L1505.6 969.6 L1507.6 969.6 L1509.6 970.6 L1551.6 970.6 L1553.6 975.6" stroke="#b877d9" stroke-width="1.25" fill="none" stroke-linejoin="round" stroke-linecap="butt" />
<path d="M1553.6 975.6 L1858.6 975.6" stroke="#e070d0" stroke-width="1.25" fill="none" stroke-linejoin="round" stroke-linecap="butt" />
<path d="M1857.6 1011.9 L1861.5 1006.5 L1865.4 1011.9 Z" fill="#9f9f9f" stroke="#9f9f9f" stroke-width="0.6" stroke-linejoin="round"/>
</svg>
<span class="t" style="left:65.00px;top:13.70px;font-size:17.9px;line-height:23px;color:#ccccdc;letter-spacing:0.114px;-webkit-text-stroke:0.25px #ccccdc;">Grafana</span>
<span class="t" style="left:64.70px;top:68.80px;font-size:17.9px;line-height:23px;color:rgba(204,204,220,0.65);letter-spacing:0.828px;">Home</span>
<span class="t" style="left:64.70px;top:108.80px;font-size:17.9px;line-height:23px;color:rgba(204,204,220,0.65);letter-spacing:0.667px;">Bookmarks</span>
<span class="t" style="left:65.61px;top:148.80px;font-size:17.9px;line-height:23px;color:rgba(204,204,220,0.65);letter-spacing:0.605px;">Starred</span>
<span class="t" style="left:65.28px;top:188.80px;font-size:17.9px;line-height:23px;color:#ccccdc;letter-spacing:0.456px;-webkit-text-stroke:0.25px #ccccdc;">Dashboards</span>
<span class="t" style="left:64.70px;top:228.80px;font-size:17.9px;line-height:23px;color:rgba(204,204,220,0.65);letter-spacing:0.530px;">Explore</span>
<span class="t" style="left:64.70px;top:268.80px;font-size:17.9px;line-height:23px;color:rgba(204,204,220,0.65);letter-spacing:0.830px;">Drilldown</span>
<span class="t" style="left:65.94px;top:308.80px;font-size:17.9px;line-height:23px;color:rgba(204,204,220,0.65);letter-spacing:0.612px;">Alerting</span>
<span class="t" style="left:65.24px;top:348.80px;font-size:17.9px;line-height:23px;color:rgba(204,204,220,0.65);letter-spacing:0.590px;">Connections</span>
<span class="t" style="left:65.94px;top:388.80px;font-size:17.9px;line-height:23px;color:rgba(204,204,220,0.65);letter-spacing:0.602px;">Administration</span>
<span class="t" style="left:414.92px;top:13.70px;font-size:17.9px;line-height:23px;color:#ccccdc;letter-spacing:0.894px;">Home</span>
<span class="t" style="left:494.92px;top:13.70px;font-size:17.9px;line-height:23px;color:#ccccdc;letter-spacing:0.589px;">Dashboards</span>
<span class="t" style="left:625.97px;top:13.70px;font-size:17.9px;line-height:23px;color:rgba(204,204,220,0.65);letter-spacing:0.585px;">MCP Gateway - Analytics Dashboard</span>
<span class="t" style="left:1311.23px;top:13.30px;font-size:17.9px;line-height:23px;color:rgba(204,204,220,0.65);letter-spacing:0.444px;">Search...</span>
<span class="t" style="left:1661.10px;top:14.10px;font-size:15.3px;line-height:20px;color:rgba(204,204,220,0.65);letter-spacing:0.885px;">ctrl+k</span>
<span class="t" style="left:1638.34px;top:64.90px;font-size:15.3px;line-height:20px;color:#ccccdc;letter-spacing:0.164px;-webkit-text-stroke:0.3px #ccccdc;">Edit</span>
<span class="t" style="left:1711.53px;top:64.90px;font-size:15.3px;line-height:20px;color:#ccccdc;letter-spacing:0.637px;-webkit-text-stroke:0.3px #ccccdc;">Export</span>
<span class="t" style="left:1811.57px;top:64.90px;font-size:15.3px;line-height:20px;color:#ffffff;letter-spacing:0.035px;-webkit-text-stroke:0.4px #fff;">Share</span>
<span class="t" style="left:408.13px;top:129.70px;font-size:15.3px;line-height:20px;color:#ccccdc;letter-spacing:0.696px;-webkit-text-stroke:0.3px #ccccdc;">server</span>
<span class="t" style="left:476.09px;top:128.50px;font-size:17.9px;line-height:23px;color:#ccccdc;letter-spacing:-0.039px;">All</span>
<span class="t" style="left:560.33px;top:129.70px;font-size:15.3px;line-height:20px;color:#ccccdc;letter-spacing:0.490px;-webkit-text-stroke:0.3px #ccccdc;">client</span>
<span class="t" style="left:621.70px;top:128.50px;font-size:17.9px;line-height:23px;color:#ccccdc;letter-spacing:0.285px;">All</span>
<span class="t" style="left:705.28px;top:129.70px;font-size:15.3px;line-height:20px;color:#ccccdc;letter-spacing:0.820px;-webkit-text-stroke:0.3px #ccccdc;">method</span>
<span class="t" style="left:782.70px;top:128.50px;font-size:17.9px;line-height:23px;color:#ccccdc;letter-spacing:0.098px;">All</span>
<span class="t" style="left:1441.90px;top:128.70px;font-size:17.9px;line-height:23px;color:#ccccdc;letter-spacing:0.203px;-webkit-text-stroke:0.3px #ccccdc;">Last 1 hour</span>
<span class="t" style="left:1714.90px;top:128.70px;font-size:17.9px;line-height:23px;color:#ccccdc;letter-spacing:0.550px;-webkit-text-stroke:0.3px #ccccdc;">Refresh</span>
<span class="t" style="left:1803.47px;top:128.70px;font-size:17.9px;line-height:23px;color:#ccccdc;letter-spacing:1.243px;-webkit-text-stroke:0.3px #ccccdc;">30s</span>
<span class="t" style="left:405.79px;top:191.70px;font-size:17.9px;line-height:23px;color:#ccccdc;letter-spacing:0.740px;-webkit-text-stroke:0.3px #ccccdc;">Real-time Protocol Activity</span>
<span class="t" style="left:459.50px;top:394.00px;font-size:16px;line-height:21px;color:#ccccdc;letter-spacing:0.398px;-webkit-text-stroke:0.3px #ccccdc;will-change:transform;">0 req/s</span>
<span class="t" style="left:450.50px;top:369.70px;font-size:16px;line-height:21px;color:#ccccdc;letter-spacing:-0.245px;-webkit-text-stroke:0.3px #ccccdc;will-change:transform;">0.1 req/s</span>
<span class="t" style="left:446.20px;top:345.40px;font-size:16px;line-height:21px;color:#ccccdc;letter-spacing:0.293px;-webkit-text-stroke:0.3px #ccccdc;will-change:transform;">0.2 req/s</span>
<span class="t" style="left:446.50px;top:321.10px;font-size:16px;line-height:21px;color:#ccccdc;letter-spacing:0.255px;-webkit-text-stroke:0.3px #ccccdc;will-change:transform;">0.3 req/s</span>
<span class="t" style="left:445.50px;top:296.80px;font-size:16px;line-height:21px;color:#ccccdc;letter-spacing:0.380px;-webkit-text-stroke:0.3px #ccccdc;will-change:transform;">0.4 req/s</span>
<span class="t" style="left:446.70px;top:272.50px;font-size:16px;line-height:21px;color:#ccccdc;letter-spacing:0.230px;-webkit-text-stroke:0.3px #ccccdc;will-change:transform;">0.5 req/s</span>
<span class="t" style="left:446.20px;top:248.20px;font-size:16px;line-height:21px;color:#ccccdc;letter-spacing:0.293px;-webkit-text-stroke:0.3px #ccccdc;will-change:transform;">0.6 req/s</span>
<span class="t" style="left:538.25px;top:412.50px;font-size:16px;line-height:21px;color:#ccccdc;letter-spacing:0.590px;-webkit-text-stroke:0.3px #ccccdc;will-change:transform;">23:40</span>
<span class="t" style="left:637.65px;top:412.50px;font-size:16px;line-height:21px;color:#ccccdc;letter-spacing:0.390px;-webkit-text-stroke:0.3px #ccccdc;will-change:transform;">23:50</span>
<span class="t" style="left:736.20px;top:412.50px;font-size:16px;line-height:21px;color:#ccccdc;letter-spacing:0.615px;-webkit-text-stroke:0.3px #ccccdc;will-change:transform;">00:00</span>
<span class="t" style="left:837.00px;top:412.50px;font-size:16px;line-height:21px;color:#ccccdc;letter-spacing:-0.285px;-webkit-text-stroke:0.3px #ccccdc;will-change:transform;">00:10</span>
<span class="t" style="left:934.85px;top:412.50px;font-size:16px;line-height:21px;color:#ccccdc;letter-spacing:0.515px;-webkit-text-stroke:0.3px #ccccdc;will-change:transform;">00:20</span>
<span class="t" style="left:1033.20px;top:412.50px;font-size:16px;line-height:21px;color:#ccccdc;letter-spacing:0.615px;-webkit-text-stroke:0.3px #ccccdc;will-change:transform;">00:30</span>
<span class="t" style="left:443.27px;top:436.80px;font-size:15.3px;line-height:20px;color:#6e9fff;letter-spacing:0.679px;-webkit-text-stroke:0.4px #6e9fff;will-change:transform;">Name</span>
<span class="t" style="left:442.70px;top:465.90px;font-size:15.3px;line-height:20px;color:#ccccdc;letter-spacing:0.342px;-webkit-text-stroke:0.3px #ccccdc;will-change:transform;">Initialize Rate</span>
<span class="t" style="left:443.70px;top:495.80px;font-size:15.3px;line-height:20px;color:#ccccdc;letter-spacing:0.303px;-webkit-text-stroke:0.3px #ccccdc;will-change:transform;">Tools List Rate</span>
<span class="t" style="left:443.70px;top:525.00px;font-size:15.3px;line-height:20px;color:#ccccdc;letter-spacing:0.230px;-webkit-text-stroke:0.3px #ccccdc;will-change:transform;">Tool Call Rate</span>
<span class="t" style="left:1155.22px;top:191.70px;font-size:17.9px;line-height:23px;color:#ccccdc;letter-spacing:0.697px;-webkit-text-stroke:0.3px #ccccdc;">Authentication Flow Analysis</span>
<span class="t" style="left:1224.70px;top:414.10px;font-size:16px;line-height:21px;color:#ccccdc;letter-spacing:0.514px;-webkit-text-stroke:0.3px #ccccdc;will-change:transform;">0 req/s</span>
<span class="t" style="left:1192.80px;top:394.20px;font-size:16px;line-height:21px;color:#ccccdc;letter-spacing:0.385px;-webkit-text-stroke:0.3px #ccccdc;will-change:transform;">0.025 req/s</span>
<span class="t" style="left:1202.20px;top:374.30px;font-size:16px;line-height:21px;color:#ccccdc;letter-spacing:0.372px;-webkit-text-stroke:0.3px #ccccdc;will-change:transform;">0.05 req/s</span>
<span class="t" style="left:1194.00px;top:354.40px;font-size:16px;line-height:21px;color:#ccccdc;letter-spacing:0.265px;-webkit-text-stroke:0.3px #ccccdc;will-change:transform;">0.075 req/s</span>
<span class="t" style="left:1215.80px;top:334.50px;font-size:16px;line-height:21px;color:#ccccdc;letter-spacing:-0.170px;-webkit-text-stroke:0.3px #ccccdc;will-change:transform;">0.1 req/s</span>
<span class="t" style="left:1197.00px;top:314.60px;font-size:16px;line-height:21px;color:#ccccdc;letter-spacing:-0.035px;-webkit-text-stroke:0.3px #ccccdc;will-change:transform;">0.125 req/s</span>
<span class="t" style="left:1206.30px;top:294.70px;font-size:16px;line-height:21px;color:#ccccdc;letter-spacing:-0.084px;-webkit-text-stroke:0.3px #ccccdc;will-change:transform;">0.15 req/s</span>
<span class="t" style="left:1198.00px;top:274.80px;font-size:16px;line-height:21px;color:#ccccdc;letter-spacing:-0.135px;-webkit-text-stroke:0.3px #ccccdc;will-change:transform;">0.175 req/s</span>
<span class="t" style="left:1211.70px;top:254.90px;font-size:16px;line-height:21px;color:#ccccdc;letter-spacing:0.343px;-webkit-text-stroke:0.3px #ccccdc;will-change:transform;">0.2 req/s</span>
<span class="t" style="left:1192.70px;top:235.00px;font-size:16px;line-height:21px;color:#ccccdc;letter-spacing:0.395px;-webkit-text-stroke:0.3px #ccccdc;will-change:transform;">0.225 req/s</span>
<span class="t" style="left:1302.65px;top:431.80px;font-size:16px;line-height:21px;color:#ccccdc;letter-spacing:0.590px;-webkit-text-stroke:0.3px #ccccdc;will-change:transform;">23:40</span>
<span class="t" style="left:1399.15px;top:431.80px;font-size:16px;line-height:21px;color:#ccccdc;letter-spacing:0.390px;-webkit-text-stroke:0.3px #ccccdc;will-change:transform;">23:50</span>
<span class="t" style="left:1494.80px;top:431.80px;font-size:16px;line-height:21px;color:#ccccdc;letter-spacing:0.615px;-webkit-text-stroke:0.3px #ccccdc;will-change:transform;">00:00</span>
<span class="t" style="left:1592.70px;top:431.80px;font-size:16px;line-height:21px;color:#ccccdc;letter-spacing:-0.285px;-webkit-text-stroke:0.3px #ccccdc;will-change:transform;">00:10</span>
<span class="t" style="left:1687.20px;top:431.80px;font-size:16px;line-height:21px;color:#ccccdc;letter-spacing:0.515px;-webkit-text-stroke:0.3px #ccccdc;will-change:transform;">00:20</span>
<span class="t" style="left:1783.10px;top:431.80px;font-size:16px;line-height:21px;color:#ccccdc;letter-spacing:0.615px;-webkit-text-stroke:0.3px #ccccdc;will-change:transform;">00:30</span>
<span class="t" style="left:1190.77px;top:455.70px;font-size:15.3px;line-height:20px;color:#6e9fff;letter-spacing:0.679px;-webkit-text-stroke:0.4px #6e9fff;will-change:transform;">Name</span>
<span class="t" style="left:1191.70px;top:485.10px;font-size:15.3px;line-height:20px;color:#ccccdc;letter-spacing:0.637px;-webkit-text-stroke:0.3px #ccccdc;will-change:transform;">Successful Auth</span>
<span class="t" style="left:1190.70px;top:514.80px;font-size:15.3px;line-height:20px;color:#ccccdc;letter-spacing:0.453px;-webkit-text-stroke:0.3px #ccccdc;will-change:transform;">Failed Auth</span>
<span class="t" style="left:407.27px;top:571.70px;font-size:17.9px;line-height:23px;color:#ccccdc;letter-spacing:0.595px;-webkit-text-stroke:0.3px #ccccdc;">Authentication Success Rate</span>
<span class="t" style="left:522.19px;top:641.70px;font-size:42.8px;line-height:56px;color:#f7f8fa;letter-spacing:0.821px;-webkit-text-stroke:0.9px #f7f8fa;will-change:transform;">54.9</span>
<span class="t" style="left:610.85px;top:661.70px;font-size:23.4px;line-height:30px;color:#f7f8fa;-webkit-text-stroke:0.6px #f7f8fa;will-change:transform;">%</span>
<span class="t" style="left:781.42px;top:571.70px;font-size:17.9px;line-height:23px;color:#ccccdc;letter-spacing:0.526px;-webkit-text-stroke:0.3px #ccccdc;">Active MCP Servers</span>
<span class="t" style="left:938.81px;top:640.40px;font-size:45.6px;line-height:59px;color:#f7f8fa;-webkit-text-stroke:1.1px #f7f8fa;will-change:transform;">5</span>
<span class="t" style="left:1155.04px;top:571.70px;font-size:17.9px;line-height:23px;color:#ccccdc;letter-spacing:0.574px;-webkit-text-stroke:0.3px #ccccdc;">Tool Executions per Hour</span>
<span class="t" style="left:1275.76px;top:639.50px;font-size:46.6px;line-height:61px;color:#f7f8fa;letter-spacing:1.817px;-webkit-text-stroke:1.2px #f7f8fa;will-change:transform;">83.4</span>
<span class="t" style="left:1528.52px;top:571.70px;font-size:17.9px;line-height:23px;color:#ccccdc;letter-spacing:0.762px;-webkit-text-stroke:0.3px #ccccdc;">Most Popular Tool</span>
<span class="t" style="left:1631.86px;top:662.10px;font-size:13.2px;line-height:17px;color:#f7f8fa;letter-spacing:0.437px;-webkit-text-stroke:0.5px #f7f8fa;will-change:transform;">intelligent_tool_finder</span>
<span class="t" style="left:405.78px;top:761.70px;font-size:17.9px;line-height:23px;color:#ccccdc;letter-spacing:0.695px;-webkit-text-stroke:0.3px #ccccdc;">Protocol Latency Analysis (P95/P99)</span>
<span class="t" style="left:447.85px;top:950.20px;font-size:16px;line-height:21px;color:#ccccdc;letter-spacing:-0.037px;-webkit-text-stroke:0.3px #ccccdc;will-change:transform;">4.75 s</span>
<span class="t" style="left:455.90px;top:916.20px;font-size:16px;line-height:21px;color:#ccccdc;letter-spacing:0.028px;-webkit-text-stroke:0.3px #ccccdc;will-change:transform;">4.8 s</span>
<span class="t" style="left:446.70px;top:882.10px;font-size:16px;line-height:21px;color:#ccccdc;letter-spacing:0.083px;-webkit-text-stroke:0.3px #ccccdc;will-change:transform;">4.85 s</span>
<span class="t" style="left:455.90px;top:848.10px;font-size:16px;line-height:21px;color:#ccccdc;letter-spacing:0.028px;-webkit-text-stroke:0.3px #ccccdc;will-change:transform;">4.9 s</span>
<span class="t" style="left:446.50px;top:815.40px;font-size:16px;line-height:21px;color:#ccccdc;letter-spacing:0.123px;-webkit-text-stroke:0.3px #ccccdc;will-change:transform;">4.95 s</span>
<span class="t" style="left:520.35px;top:982.60px;font-size:16px;line-height:21px;color:#ccccdc;letter-spacing:0.590px;-webkit-text-stroke:0.3px #ccccdc;will-change:transform;">23:40</span>
<span class="t" style="left:622.95px;top:982.60px;font-size:16px;line-height:21px;color:#ccccdc;letter-spacing:0.390px;-webkit-text-stroke:0.3px #ccccdc;will-change:transform;">23:50</span>
<span class="t" style="left:724.70px;top:982.60px;font-size:16px;line-height:21px;color:#ccccdc;letter-spacing:0.615px;-webkit-text-stroke:0.3px #ccccdc;will-change:transform;">00:00</span>
<span class="t" style="left:828.70px;top:982.60px;font-size:16px;line-height:21px;color:#ccccdc;letter-spacing:-0.285px;-webkit-text-stroke:0.3px #ccccdc;will-change:transform;">00:10</span>
<span class="t" style="left:929.30px;top:982.60px;font-size:16px;line-height:21px;color:#ccccdc;letter-spacing:0.515px;-webkit-text-stroke:0.3px #ccccdc;will-change:transform;">00:20</span>
<span class="t" style="left:1031.30px;top:982.60px;font-size:16px;line-height:21px;color:#ccccdc;letter-spacing:0.615px;-webkit-text-stroke:0.3px #ccccdc;will-change:transform;">00:30</span>
<span class="t" style="left:443.27px;top:1006.80px;font-size:15.3px;line-height:20px;color:#6e9fff;letter-spacing:0.679px;-webkit-text-stroke:0.4px #6e9fff;will-change:transform;">Name</span>
<span class="t" style="left:1153.68px;top:761.70px;font-size:17.9px;line-height:23px;color:#ccccdc;letter-spacing:0.553px;-webkit-text-stroke:0.3px #ccccdc;">Request Volume Over Time</span>
<span class="t" style="left:1215.70px;top:964.00px;font-size:16px;line-height:21px;color:#ccccdc;letter-spacing:0.464px;-webkit-text-stroke:0.3px #ccccdc;will-change:transform;">0 req/s</span>
<span class="t" style="left:1192.90px;top:939.03px;font-size:16px;line-height:21px;color:#ccccdc;letter-spacing:0.372px;-webkit-text-stroke:0.3px #ccccdc;will-change:transform;">0.02 req/s</span>
<span class="t" style="left:1192.85px;top:914.06px;font-size:16px;line-height:21px;color:#ccccdc;letter-spacing:0.427px;-webkit-text-stroke:0.3px #ccccdc;will-change:transform;">0.04 req/s</span>
<span class="t" style="left:1192.90px;top:889.09px;font-size:16px;line-height:21px;color:#ccccdc;letter-spacing:0.372px;-webkit-text-stroke:0.3px #ccccdc;will-change:transform;">0.06 req/s</span>
<span class="t" style="left:1192.90px;top:864.12px;font-size:16px;line-height:21px;color:#ccccdc;letter-spacing:0.372px;-webkit-text-stroke:0.3px #ccccdc;will-change:transform;">0.08 req/s</span>
<span class="t" style="left:1206.80px;top:839.15px;font-size:16px;line-height:21px;color:#ccccdc;letter-spacing:-0.207px;-webkit-text-stroke:0.3px #ccccdc;will-change:transform;">0.1 req/s</span>
<span class="t" style="left:1197.60px;top:814.18px;font-size:16px;line-height:21px;color:#ccccdc;letter-spacing:-0.151px;-webkit-text-stroke:0.3px #ccccdc;will-change:transform;">0.12 req/s</span>
<span class="t" style="left:1294.05px;top:982.60px;font-size:16px;line-height:21px;color:#ccccdc;letter-spacing:0.590px;-webkit-text-stroke:0.3px #ccccdc;will-change:transform;">23:40</span>
<span class="t" style="left:1392.10px;top:982.60px;font-size:16px;line-height:21px;color:#ccccdc;letter-spacing:0.390px;-webkit-text-stroke:0.3px #ccccdc;will-change:transform;">23:50</span>
<span class="t" style="left:1489.30px;top:982.60px;font-size:16px;line-height:21px;color:#ccccdc;letter-spacing:0.615px;-webkit-text-stroke:0.3px #ccccdc;will-change:transform;">00:00</span>
<span class="t" style="left:1588.75px;top:982.60px;font-size:16px;line-height:21px;color:#ccccdc;letter-spacing:-0.285px;-webkit-text-stroke:0.3px #ccccdc;will-change:transform;">00:10</span>
<span class="t" style="left:1684.80px;top:982.60px;font-size:16px;line-height:21px;color:#ccccdc;letter-spacing:0.515px;-webkit-text-stroke:0.3px #ccccdc;will-change:transform;">00:20</span>
<span class="t" style="left:1782.25px;top:982.60px;font-size:16px;line-height:21px;color:#ccccdc;letter-spacing:0.615px;-webkit-text-stroke:0.3px #ccccdc;will-change:transform;">00:30</span>
<span class="t" style="left:1191.57px;top:1006.80px;font-size:15.3px;line-height:20px;color:#6e9fff;letter-spacing:0.679px;-webkit-text-stroke:0.4px #6e9fff;will-change:transform;">Name</span>
</body></html>
